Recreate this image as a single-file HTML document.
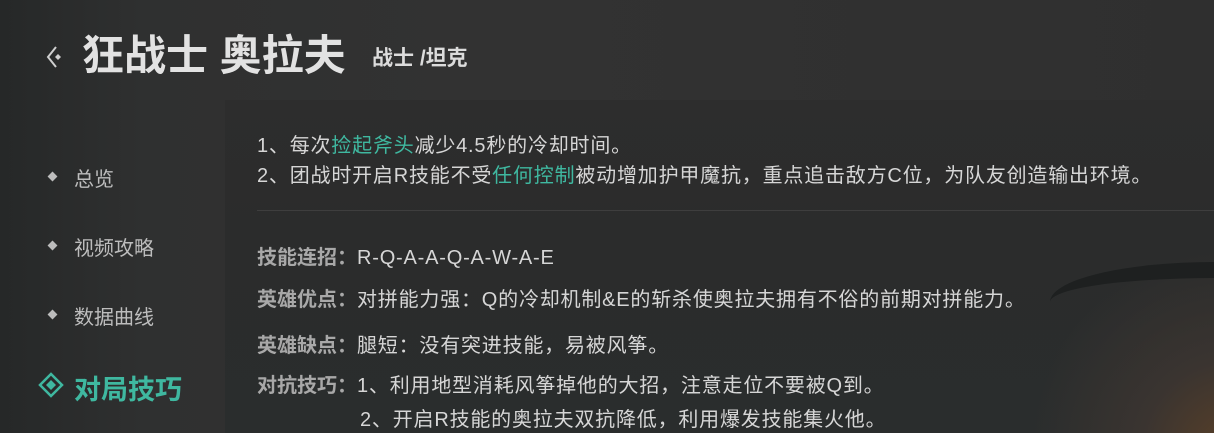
<!DOCTYPE html>
<html><head><meta charset="utf-8"><style>
*{margin:0;padding:0;box-sizing:border-box}
html,body{width:1214px;height:433px;overflow:hidden}
body{position:relative;font-family:"Liberation Sans","Noto Sans CJK SC",sans-serif;
background:linear-gradient(90deg,#262828 0%,#2f3030 12%,#323232 40%,#2f2f2f 100%);color:#d4d4d4}
.panel{position:absolute;left:225px;top:100px;right:0;bottom:0;background:linear-gradient(180deg,#2d2d2d 0%,#2b2c2c 40%,#2a2d2d 100%)}
.art{position:absolute;left:1014px;top:230px;width:200px;height:203px;background:radial-gradient(circle at 110% 110%,#5a4028 0%,#3a3430 30%,rgba(45,48,48,0) 65%)}
.horn{position:absolute;left:1050px;top:262px;width:164px;height:40px;border-top:16px solid #1e2020;border-radius:100% 0 0 0}
.abs{position:absolute;white-space:nowrap}
h1{position:absolute;left:82px;top:30px;font-size:42px;font-weight:bold;color:#e2e2e2;line-height:52px;white-space:nowrap}
.sub{left:372px;top:42px;font-size:21px;font-weight:bold;color:#dcdcdc}
.nav{left:74px;font-size:20px;color:#bdbdbd}
.dot{position:absolute;left:-25px;top:10px;width:7px;height:7px;background:#bdbdbd;transform:rotate(45deg)}
.act{left:74px;top:368px;font-size:27px;font-weight:bold;color:#3fb8a0}
.t{left:257px;font-size:20px;color:#d6d6d6;line-height:26px;letter-spacing:0.8px}
.g{color:#3fb8a0}
.b{font-weight:bold;color:#a8a8a8;letter-spacing:0}
.sep{position:absolute;left:257px;right:0;top:210px;height:1px;background:#3e3e3e}
</style></head><body>
<div class="panel"></div>
<div class="art"></div>
<div class="horn"></div>
<svg class="abs" style="left:45px;top:44px" width="20" height="26" viewBox="0 0 20 26"><path d="M11 3 L3 13 L11 23" fill="none" stroke="#cfcfcf" stroke-width="2"/><path d="M13 10 L16 13 L13 16 L10 13Z" fill="#cfcfcf"/></svg>
<h1>狂战士 奥拉夫</h1>
<div class="abs sub">战士 /坦克</div>
<div class="abs nav" style="top:163px"><span class="dot"></span>总览</div>
<div class="abs nav" style="top:232px"><span class="dot"></span>视频攻略</div>
<div class="abs nav" style="top:301px"><span class="dot"></span>数据曲线</div>
<svg class="abs" style="left:38px;top:372px" width="26" height="26" viewBox="0 0 26 26"><path d="M13 2 L24 13 L13 24 L2 13Z" fill="none" stroke="#3fb8a0" stroke-width="2.5"/><path d="M13 8 L18 13 L13 18 L8 13Z" fill="#3fb8a0"/></svg>
<div class="abs act">对局技巧</div>
<div class="abs t" style="top:133px">1、每次<span class="g">捡起斧头</span>减少4.5秒的冷却时间。</div>
<div class="abs t" style="top:163px">2、团战时开启R技能不受<span class="g">任何控制</span>被动增加护甲魔抗，重点追击敌方C位，为队友创造输出环境。</div>
<div class="sep"></div>
<div class="abs t" style="top:245px"><span class="b">技能连招：</span>R-Q-A-A-Q-A-W-A-E</div>
<div class="abs t" style="top:287px"><span class="b">英雄优点：</span>对拼能力强：Q的冷却机制&amp;E的斩杀使奥拉夫拥有不俗的前期对拼能力。</div>
<div class="abs t" style="top:333px"><span class="b">英雄缺点：</span>腿短：没有突进技能，易被风筝。</div>
<div class="abs t" style="top:373px"><span class="b">对抗技巧：</span>1、利用地型消耗风筝掉他的大招，注意走位不要被Q到。</div>
<div class="abs t" style="top:409px;left:360px;line-height:22px">2、开启R技能的奥拉夫双抗降低，利用爆发技能集火他。</div>
</body></html>
